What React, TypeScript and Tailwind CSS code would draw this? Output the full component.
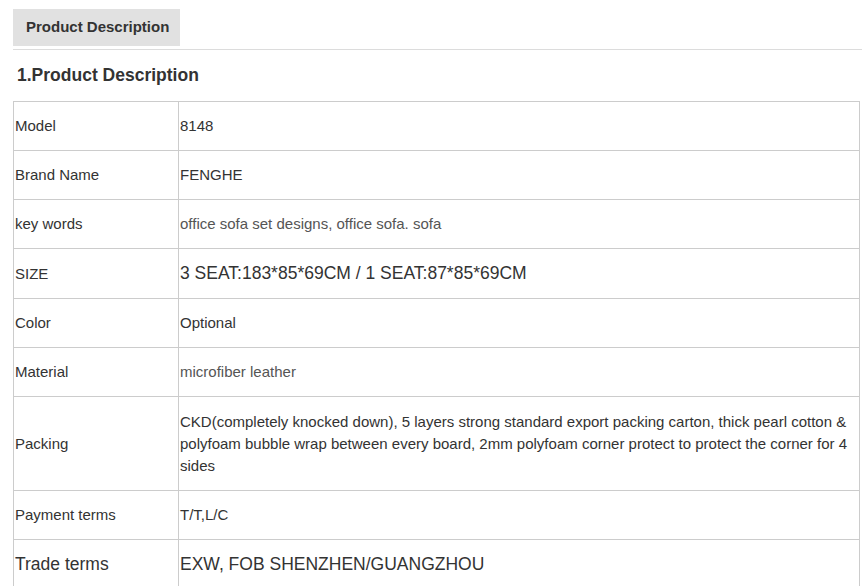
import React from "react";

const rows: { label: string; value: string; big?: boolean; bigLabel?: boolean; light?: boolean; tall?: boolean }[] = [
  { label: "Model", value: "8148" },
  { label: "Brand Name", value: "FENGHE" },
  { label: "key words", value: "office sofa set designs, office sofa. sofa", light: true },
  { label: "SIZE", value: "3 SEAT:183*85*69CM / 1 SEAT:87*85*69CM", big: true },
  { label: "Color", value: "Optional" },
  { label: "Material", value: "microfiber leather", light: true },
  {
    label: "Packing",
    value:
      "CKD(completely knocked down), 5 layers strong standard export packing carton, thick pearl cotton & polyfoam bubble wrap between every board, 2mm polyfoam corner protect to protect the corner for 4 sides",
    tall: true,
  },
  { label: "Payment terms", value: "T/T,L/C" },
  { label: "Trade terms", value: "EXW, FOB SHENZHEN/GUANGZHOU", big: true, bigLabel: true },
];

export default function App() {
  return (
    <div className="bg-white w-[862px] h-[586px] overflow-hidden text-[#333]" style={{ fontFamily: '"Liberation Sans", Arial, sans-serif' }}>
      <div className="pt-[9px] pl-[13px]">
        <div className="border-b border-[#dcdcdc] pb-[3px]">
          <div className="w-[167px] h-[37px] bg-[#e1e1e1] flex items-center pl-[13px] text-[15px] font-bold text-[#333]">
            Product Description
          </div>
        </div>
      </div>
      <div className="pl-[17px] pt-[13px] h-[51px] text-[17.5px] font-bold leading-[24px] text-[#333]">
        1.Product Description
      </div>
      <div className="pl-[13px] pr-[2px]">
        <table className="w-full border-collapse">
          <tbody>
            {rows.map((r) => (
              <tr key={r.label}>
                <td
                  className={`w-[165px] border border-[#cccccc] pl-[1px] align-middle ${
                    r.tall ? "pt-[14px] pb-[13px] leading-[22px]" : r.big ? "py-[13px] leading-[23px]" : "py-[13px] leading-[22px]"
                  } ${r.bigLabel ? "text-[17.5px]" : "text-[15px]"} text-[#333]`}
                >
                  {r.label}
                </td>
                <td
                  className={`border border-[#cccccc] pl-[1px] pr-[10px] align-middle ${
                    r.tall ? "pt-[14px] pb-[13px] leading-[22px]" : r.big ? "py-[13px] leading-[23px]" : "py-[13px] leading-[22px]"
                  } ${r.big ? "text-[17.5px]" : "text-[15px]"} ${r.light ? "text-[#555]" : "text-[#333]"}`}
                >
                  {r.value}
                </td>
              </tr>
            ))}
          </tbody>
        </table>
      </div>
    </div>
  );
}
